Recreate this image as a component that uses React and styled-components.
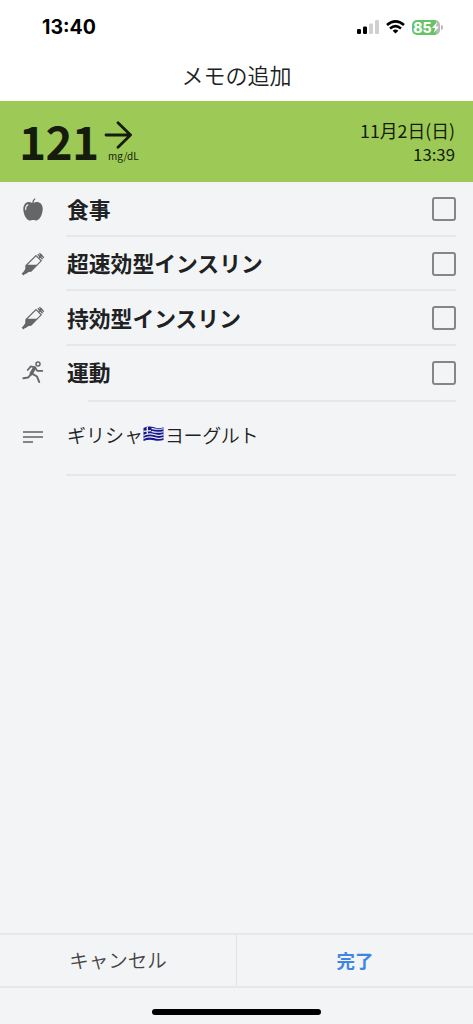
import React, { useState } from "react";
import styled, { createGlobalStyle } from "styled-components";

const AppleIcon = () => (
  <svg width="20" height="23" viewBox="0 0 20 23" fill="#666">
    <path d="M9.200 5.100C9.300 3 10.200 1.200 11.700.2l1 .9C11.300 2.200 10.700 3.400 10.600 4.700 13 3.600 16 3.600 18 5.700 20.300 8.300 20 13 18.700 16.500 17.600 19.800 15.500 22.500 12.700 22.500 11.500 22.500 11 22.100 10 22.100S8.500 22.500 7.300 22.500C4.500 22.500 2.400 19.800 1.300 16.500 0 13-.3 8.300 2 5.700 4 3.600 7 3.700 9.200 5.100z" />
    <path d="M4.900 6.800C3.200 7.600 2.500 9.400 2.700 11.600" stroke="#f3f4f6" strokeWidth="1.100" fill="none" strokeLinecap="round" />
  </svg>
);

const SyringeIcon = () => (
  <svg width="24" height="24" viewBox="0 0 24 24" fill="none" stroke="#666">
    <path d="M15 3.600 20.200 8.800 10 19.200 7.700 19.200 4.500 21.200 3.600 20.300 5 16.800 5 13.600z" strokeWidth="1.200" />
    <path d="M6.200 13H16L10 19.200 7.700 19.200 4.600 21.500 3.200 20.200 5 16.800 5 14z" fill="#666" strokeWidth="0.500" />
    <path d="M4.800 19.200 1.600 22.600" strokeWidth="2.600" />
    <path d="M16.800 2.300 21.600 7.200M18.400 1.300 22.800 5.700" strokeWidth="1.300" />
    <path d="M18 5.600 21 2.600" strokeWidth="1.800" />
  </svg>
);

const RunnerIcon = () => (
  <svg width="22" height="23" viewBox="0 0 22 23" fill="none" stroke="#666" strokeLinecap="round" strokeLinejoin="round">
    <circle cx="16" cy="3" r="2" strokeWidth="1.500" />
    <path d="M5.700 9 8.800 5.400 13 6.300 15.200 9.800 20.300 9.900" strokeWidth="1.700" />
    <path d="M12.500 7 9.200 12.700" strokeWidth="3.400" />
    <path d="M9 13.400 6 16.600 1.400 17.200" strokeWidth="2" />
    <path d="M10.400 12.900 15 15.500 17.200 21" strokeWidth="2" />
  </svg>
);

const NoteIcon = () => (
  <svg width="20" height="12" viewBox="0 0 20 12" fill="#858585">
    <path d="M0 0h20v2H0zM0 5h20v2H0zM0 10h10v2H0z" />
  </svg>
);

const GreekFlag = () => (
  <svg width="21" height="16" viewBox="0 0 21 16" role="img" aria-label="🇬🇷">
    <path d="M.5 2Q6 -.5 11 1.200T20.500 1.200V14Q16 15.500 11 14.300T.5 15z" fill="#17178c" />
    <g fill="none" stroke="#f0f2fa" strokeWidth="1.100">
      <path d="M8.500 2.400Q14 4 20.500 2.700M8.500 5.400Q14 7 20.500 5.700" />
      <path d="M.5 9.400Q6 6.900 11 8.600T20.500 8.600M.5 12.400Q6 9.900 11 11.600T20.500 11.600" />
      <path d="M.5 5.300 8 4.600M4.300 1v7.400" strokeWidth="1.300" />
    </g>
  </svg>
);

const entries = [
  { label: "食事", Icon: AppleIcon },
  { label: "超速効型インスリン", Icon: SyringeIcon },
  { label: "持効型インスリン", Icon: SyringeIcon },
  { label: "運動", Icon: RunnerIcon },
];

const App = () => {
  const [checked, setChecked] = useState({});

  const toggle = (label) => {
    setChecked((prev) => ({ ...prev, [label]: !prev[label] }));
  };

  return (
    <>
      <GlobalStyle />
      <Screen>
        <StatusBar>
          <Clock>13:40</Clock>
          <StatusIcons>
            <svg width="22" height="14" viewBox="0 0 22 14">
              <rect x="0" y="9" width="4" height="5" rx="1.200" />
              <rect x="6" y="6.500" width="4" height="7.500" rx="1.200" />
              <rect x="12" y="3.500" width="4" height="10.500" rx="1.200" fill="#d0d0d0" />
              <rect x="18" y="0" width="4" height="14" rx="1.200" fill="#d0d0d0" />
            </svg>
            <svg width="19" height="14" viewBox="0 0 19 14" fill="none" stroke="#000" strokeWidth="2.600">
              <path d="M1 5Q9.500 -2.300 18 5" />
              <path d="M4 8.500Q9.500 3.900 15 8.500" />
              <path d="M9.500 13.500 6.600 10.700Q9.500 8.500 12.400 10.700z" fill="#000" stroke="none" />
            </svg>
            <Battery>
              <BatteryBody>
                85
                <svg width="7" height="11" viewBox="0 0 7 11" fill="#fff">
                  <path d="M5 0 0 6h3L2 11l5-6.500H4z" />
                </svg>
              </BatteryBody>
              <BatteryTip />
            </Battery>
          </StatusIcons>
        </StatusBar>

        <Title>メモの追加</Title>

        <Glucose>
          <Value>121</Value>
          <Trend>
            <svg width="29" height="28" viewBox="0 0 29 28" fill="none" stroke="#151c0b" strokeWidth="2.800" strokeLinecap="round" strokeLinejoin="round">
              <path d="M2 14h24.500M14 1.800 26.500 14 14 26.200" />
            </svg>
            <Unit>mg/dL</Unit>
          </Trend>
          <DateTime>
            <span>11月2日(日)</span>
            <Time>13:39</Time>
          </DateTime>
        </Glucose>

        <List>
          {entries.map(({ label, Icon }, i) => (
            <Row key={label}>
              <IconCell><Icon /></IconCell>
              <RowBody $last={i === entries.length - 1}>
                <Label>{label}</Label>
                <Checkbox
                  role="checkbox"
                  aria-label={label}
                  aria-checked={!!checked[label]}
                  $on={checked[label]}
                  onClick={() => toggle(label)}
                />
              </RowBody>
            </Row>
          ))}
          <NoteDivider />
          <NoteRow>
            <IconCell><NoteIcon /></IconCell>
            <NoteText>ギリシャ<GreekFlag /><span>ヨーグルト</span></NoteText>
          </NoteRow>
        </List>

        <Footer>
          <FooterButton>キャンセル</FooterButton>
          <FooterButton $primary>完了</FooterButton>
        </Footer>
        <HomeArea><HomeIndicator /></HomeArea>
      </Screen>
    </>
  );
};

export default App;

// ---------- Styled Components ----------

const GlobalStyle = createGlobalStyle`
  * {
    box-sizing: border-box;
  }

  body {
    margin: 0;
    font-family: "Noto Sans CJK JP", sans-serif;
    color: #202122;
  }

  svg {
    display: block;
    flex-shrink: 0;
  }
`;

const Screen = styled.div`
  display: flex;
  flex-direction: column;
  height: 1024px;
  background: #f3f4f6;
  overflow: hidden;
`;

const StatusBar = styled.header`
  display: flex;
  justify-content: space-between;
  height: 54px;
  padding: 0 30px 0 42px;
  background: #fff;
`;

const Clock = styled.div`
  padding-top: 15px;
  font: 750 19.5px/25px Inter, sans-serif;
  color: #000;
`;

const StatusIcons = styled.div`
  display: flex;
  align-items: center;
  gap: 7px;
  height: 54px;
`;

const Battery = styled.div`
  display: flex;
  align-items: center;
  gap: 1px;
`;

const BatteryBody = styled.div`
  display: flex;
  align-items: center;
  justify-content: center;
  width: 28px;
  height: 15px;
  border-radius: 5px;
  background: linear-gradient(90deg, #65c466 85%, #b9b9b9 85%);
  color: #fff;
  font: 800 14px/15px Inter, sans-serif;
`;

const BatteryTip = styled.div`
  width: 2px;
  height: 5px;
  border-radius: 0 2px 2px 0;
  background: #b9b9b9;
`;

const Title = styled.h1`
  height: 46.5px;
  margin: 0;
  background: #fff;
  font-size: 22px;
  line-height: 41px;
  font-weight: 350;
  text-align: center;
`;

const Glucose = styled.section`
  display: flex;
  height: 81.5px;
  padding: 0 18px 0 19px;
  background: #9dca56;
  color: #151c0b;
`;

const Value = styled.div`
  width: 85px;
  font-size: 46px;
  font-weight: 700;
  letter-spacing: -0.7px;
  line-height: 79px;
`;

const Trend = styled.div`
  padding-top: 20px;
`;

const Unit = styled.div`
  padding-left: 4px;
  font-size: 10px;
  line-height: 14px;
`;

const DateTime = styled.div`
  display: flex;
  flex-direction: column;
  align-items: flex-end;
  margin-left: auto;
  padding-top: 17px;
  font-size: 17.8px;
  line-height: 24px;
`;

const Time = styled.span`
  font-size: 16.8px;
`;

const List = styled.main`
  flex: 1;
  padding-right: 17px;
`;

const Row = styled.div`
  display: flex;
  height: 54.5px;
`;

const IconCell = styled.div`
  display: flex;
  align-items: center;
  justify-content: center;
  width: 66px;
`;

const RowBody = styled.div`
  display: flex;
  flex: 1;
  align-items: center;
  justify-content: space-between;
  padding-top: ${({ $last }) => ($last ? "0" : "2px")};
  border-bottom: ${({ $last }) => ($last ? "0" : "2px solid #e6e7e9")};
`;

const Label = styled.span`
  padding: 0 0 2px 1px;
  font-size: 21.8px;
  font-weight: 700;
`;

const Checkbox = styled.button`
  width: 24px;
  height: 24px;
  padding: 0;
  border: 2px solid #858688;
  border-radius: 3px;
  background: ${({ $on }) => ($on ? "#3f86e4" : "transparent")};
`;

const NoteDivider = styled.div`
  height: 2px;
  margin-left: 88px;
  background: #e6e7e9;
`;

const NoteRow = styled.div`
  display: flex;
  height: 74px;

  ${IconCell} {
    padding-bottom: 4px;
  }
`;

const NoteText = styled.div`
  display: flex;
  flex: 1;
  align-items: center;
  padding: 0 0 8px 1px;
  border-bottom: 2px solid #e6e7e9;
  font-size: 19px;
  font-weight: 350;

  span {
    letter-spacing: -0.4px;
    padding-left: 1px;
  }
`;

const Footer = styled.footer`
  display: flex;
  height: 55px;
  border-top: 2px solid #e6e7e9;
  border-bottom: 2px solid #e6e7e9;
`;

const FooterButton = styled.button`
  flex: 1;
  padding: 0 0 2px;
  border: 0;
  background: none;
  font-family: inherit;
  font-size: ${({ $primary }) => ($primary ? "18.5px" : "19.5px")};
  font-weight: ${({ $primary }) => ($primary ? 700 : 350)};
  color: ${({ $primary }) => ($primary ? "#3f86e4" : "#444")};

  & + & {
    border-left: 1px solid #e2e3e5;
  }
`;

const HomeArea = styled.div`
  display: flex;
  justify-content: center;
  height: 36px;
  padding-top: 21px;
`;

const HomeIndicator = styled.div`
  width: 169px;
  height: 6px;
  border-radius: 3px;
  background: #000;
`;
